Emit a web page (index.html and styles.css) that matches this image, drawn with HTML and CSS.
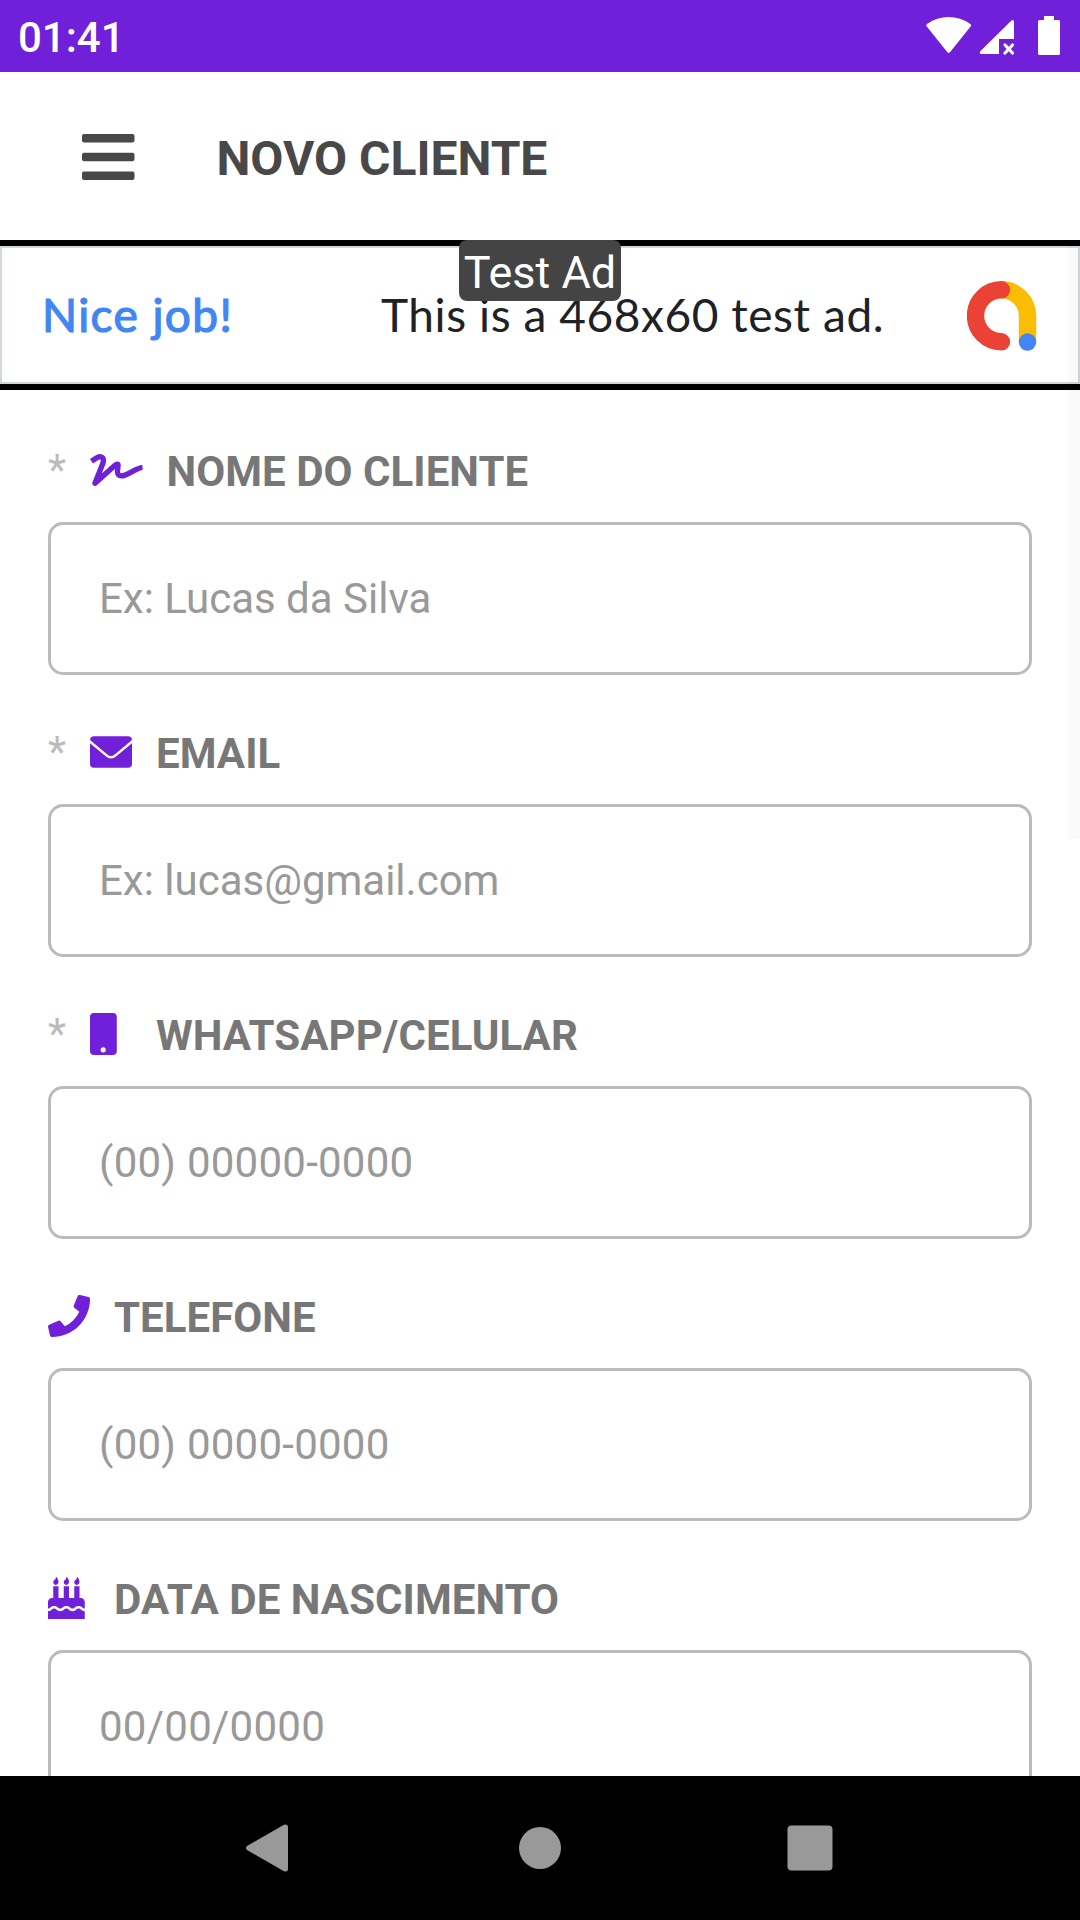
FILE: index.html
```html
<!DOCTYPE html>
<html lang="pt-BR">
<head>
<meta charset="utf-8">
<title>Novo Cliente</title>
<link rel="stylesheet" href="styles.css">
</head>
<body>
<div class="screen">
  <div class="status-bar">
    <span class="clock">01:41</span>
    <svg class="status-icons" width="136" height="40" viewBox="0 0 136 40">
      <path d="M2.8 10.6Q1.400 9 3 7.900Q13 1 24.700 1T46.400 7.900Q48 9 46.600 10.600L26.200 35.900Q24.700 37.700 23.200 35.900Z"/>
      <path d="M90 5.500V23H75V38H57.500Q54.500 37.500 56.500 35L87.500 4.500Q89.500 3 90 5.500Z"/>
      <path class="cross" d="M81 29l7.500 8M88.500 29l-7.500 8"/>
      <path d="M120 0h10v4h4.500q1.500 0 1.500 1.500v32q0 1.500-1.500 1.500h-19q-1.500 0-1.500-1.500v-32q0-1.500 1.500-1.500h4.500z"/>
    </svg>
  </div>

  <header class="app-header">
    <svg class="menu-icon" viewBox="0 0 448 512"><path d="M16 132h416c8.800 0 16-7.200 16-16V76c0-8.800-7.200-16-16-16H16C7.200 60 0 67.200 0 76v40c0 8.800 7.200 16 16 16zm0 160h416c8.800 0 16-7.200 16-16v-40c0-8.800-7.200-16-16-16H16c-8.800 0-16 7.200-16 16v40c0 8.800 7.200 16 16 16zm0 160h416c8.800 0 16-7.200 16-16v-40c0-8.800-7.200-16-16-16H16c-8.800 0-16 7.200-16 16v40c0 8.800 7.200 16 16 16z"/></svg>
    <h1 class="title">NOVO CLIENTE</h1>
  </header>

  <div class="ad">
    <span class="ad-praise">Nice job!</span>
    <span class="ad-text">This is a 468x60 test ad.</span>
    <svg class="ad-logo" width="70" height="70" viewBox="0 0 70 70">
      <path class="yellow" d="M34.500 8.800A26 26 0 0 1 60.500 34.800V61"/>
      <path class="red" d="M34.500 8.800a26 26 0 0 0 0 52"/>
      <circle class="blue" cx="60.500" cy="61" r="8.700"/>
    </svg>
    <span class="ad-badge">Test Ad</span>
  </div>

  <main class="form">
    <div class="field">
      <label class="label" for="nome"><span class="required">*</span>
        <svg class="icon icon-wide" viewBox="0 0 52.5 42"><path class="signature" d="M1.500 12.300C5.500 9.500 8 7.600 10 7.800C13.500 8.100 14 11 12.800 14.500L5 34.300L25 16.200C27 14.500 28.300 14.800 28 17L27.500 21.500C27.300 25.500 28.500 27.300 32.500 26.800C38 26.300 46 19 52.500 18.400"/></svg>
        <span>NOME DO CLIENTE</span></label>
      <input class="input" id="nome" type="text" placeholder="Ex: Lucas da Silva">
    </div>

    <div class="field">
      <label class="label" for="email"><span class="required">*</span>
        <svg class="icon" viewBox="0 0 42 42"><rect y="5.300" width="42" height="31.500" rx="4"/><path class="fold" d="M-1 9.800L16.500 24.300Q21 28.300 25.500 24.300L43 9.800"/></svg>
        <span>EMAIL</span></label>
      <input class="input" id="email" type="text" placeholder="Ex: lucas@gmail.com">
    </div>

    <div class="field">
      <label class="label" for="celular"><span class="required">*</span>
        <svg class="icon" viewBox="0 0 42 42"><rect width="26.800" height="42" rx="4"/><circle class="hole" cx="13.200" cy="36.800" r="2.600"/></svg>
        <span>WHATSAPP/CELULAR</span></label>
      <input class="input numeric" id="celular" type="text" placeholder="(00) 00000-0000">
    </div>

    <div class="field">
      <label class="label" for="telefone">
        <svg class="icon" viewBox="0 0 512 512"><path d="M493.4 24.6l-104-24c-11.3-2.6-22.9 3.3-27.5 13.9l-48 112c-4.2 9.8-1.4 21.3 6.9 28l60.6 49.6c-36 76.7-98.9 140.5-177.2 177.2l-49.6-60.6c-6.8-8.3-18.2-11.1-28-6.9l-112 48C3.900 366.500-2 378.100.6 389.400l24 104C27.100 504.200 36.700 512 48 512c256.100 0 464-207.500 464-464 0-11.200-7.700-20.900-18.600-23.400z"/></svg>
        <span>TELEFONE</span></label>
      <input class="input numeric" id="telefone" type="text" placeholder="(00) 0000-0000">
    </div>

    <div class="field">
      <label class="label" for="nascimento">
        <svg class="icon" viewBox="0 0 512 512"><path d="M448 384c-28.020 0-31.260-32-74.500-32-43.430 0-46.825 32-74.750 32-27.695 0-31.454-32-74.750-32-42.842 0-47.218 32-74.500 32-28.148 0-31.202-32-74.750-32-43.547 0-46.653 32-74.750 32v-80c0-26.500 21.500-48 48-48h16V112h64v144h64V112h64v144h64V112h64v144h16c26.500 0 48 21.500 48 48v80zm0 128H0v-96c43.356 0 46.767-32 74.750-32 27.951 0 31.253 32 74.750 32 42.843 0 47.217-32 74.500-32 28.148 0 31.201 32 74.750 32 43.357 0 46.767-32 74.750-32 27.488 0 31.252 32 74.500 32v96zM96 96c-17.750 0-32-14.250-32-32 0-31 32-23 32-64 12 0 32 29.500 32 56s-14.250 40-32 40zm128 0c-17.750 0-32-14.250-32-32 0-31 32-23 32-64 12 0 32 29.500 32 56s-14.250 40-32 40zm128 0c-17.750 0-32-14.250-32-32 0-31 32-23 32-64 12 0 32 29.500 32 56s-14.250 40-32 40z"/></svg>
        <span>DATA DE NASCIMENTO</span></label>
      <input class="input numeric" id="nascimento" type="text" placeholder="00/00/0000">
    </div>
  </main>

  <nav class="nav-bar">
    <svg width="48" height="48" viewBox="0 0 48 48"><path d="M1 22L38 .8Q42 -.5 42 3V45Q42 48.500 38 47.200L1 26Q-1 24 1 22Z"/></svg>
    <svg width="42" height="42" viewBox="0 0 42 42"><circle cx="21" cy="21" r="21"/></svg>
    <svg width="46" height="46" viewBox="0 0 46 46"><rect x=".5" y=".5" width="45" height="45" rx="4"/></svg>
  </nav>
  <div class="scroll-thumb"></div>
</div>
</body>
</html>
```

FILE: styles.css
```css
* { box-sizing: border-box; }

body {
  margin: 0;
  font-family: Roboto, "Liberation Sans", sans-serif;
  background: #fff;
}

.screen {
  position: relative;
  display: flex;
  flex-direction: column;
  width: 1080px;
  height: 1920px;
  overflow: hidden;
}

.status-bar {
  display: flex;
  flex: none;
  align-items: center;
  justify-content: space-between;
  height: 72px;
  padding: 0 19px 0 18px;
  background: #7120d9;
  color: #fff;
}
.clock { font-size: 42px; font-weight: 500; line-height: 50px; padding-top: 3px; }
.status-icons { fill: #fff; margin-right: 1px; }
.cross { fill: none; stroke: #fff; stroke-width: 3.2; stroke-linecap: round; }

.app-header {
  display: flex;
  flex: none;
  align-items: center;
  gap: 82px;
  height: 168px;
  padding-left: 82px;
  color: #484848;
}
.menu-icon { width: 52.5px; height: 60px; margin-top: 1px; fill: currentColor; }
.title { margin: 6px 0 0; font-size: 48px; font-weight: 700; line-height: 56px; }

.ad {
  position: relative;
  display: flex;
  flex: none;
  align-items: center;
  height: 150px;
  padding: 0 43px 0 42px;
  border: 6px solid #000;
  border-width: 6px 0;
  box-shadow: inset 0 0 0 2px #cfd8dc;
  font-family: Lato, sans-serif;
  font-size: 46px;
  line-height: 56px;
  white-space: nowrap;
}
.ad-praise {
  width: 339px;
  color: #4285f4;
  letter-spacing: 1.4px;
  -webkit-text-stroke: 1.2px #4285f4;
}
.ad-text { color: #202124; letter-spacing: .57px; }
.ad-logo { margin: 1px 0 0 auto; }
.yellow { fill: none; stroke: #fbbc04; stroke-width: 17.4; }
.red { fill: none; stroke: #ea4335; stroke-width: 17.4; stroke-linecap: round; }
.blue { fill: #4285f4; }
.ad-badge {
  position: absolute;
  top: -6px;
  left: 459px;
  width: 162px;
  height: 61px;
  border-radius: 8px;
  background: #444;
  color: #fff;
  font-family: Roboto, sans-serif;
  font-size: 45px;
  line-height: 66px;
  text-align: center;
}

.form {
  display: flex;
  flex: 1;
  flex-direction: column;
  gap: 54px;
  min-height: 0;
  padding: 57px 48px 0;
  overflow: hidden;
}
.field { display: flex; flex: none; flex-direction: column; gap: 26px; }
.label {
  display: flex;
  align-items: center;
  height: 49px;
  color: #777;
  font-size: 42px;
  font-weight: 700;
  line-height: 49px;
  letter-spacing: .05px;
}
.required { width: 42px; margin-bottom: 5px; color: #bbb; font-weight: 400; }
.icon { width: 42px; height: 42px; margin: 0 24px 4px 0; fill: #7120d9; }
.icon-wide { width: 52.5px; }
.signature { fill: none; stroke: #7120d9; stroke-width: 5.4; stroke-linejoin: round; }
.fold { fill: none; stroke: #fff; stroke-width: 2.4; }
.hole { fill: #fff; }
.input {
  width: 100%;
  height: 153px;
  padding: 0 48px;
  border: 3px solid #bbb;
  border-radius: 15px;
  background: #fff;
  color: #444;
  font: 400 42px/49px Roboto, "Liberation Sans", sans-serif;
}
.input::placeholder { color: #999; opacity: 1; }
.numeric { letter-spacing: .25px; }

.nav-bar {
  display: grid;
  flex: none;
  grid-template-columns: repeat(3, 270px);
  place-content: center;
  place-items: center;
  height: 144px;
  background: #000;
  fill: #999;
}

.scroll-thumb {
  position: absolute;
  top: 240px;
  right: 0;
  width: 12px;
  height: 599px;
  background: rgba(0, 0, 0, .02);
}
```
